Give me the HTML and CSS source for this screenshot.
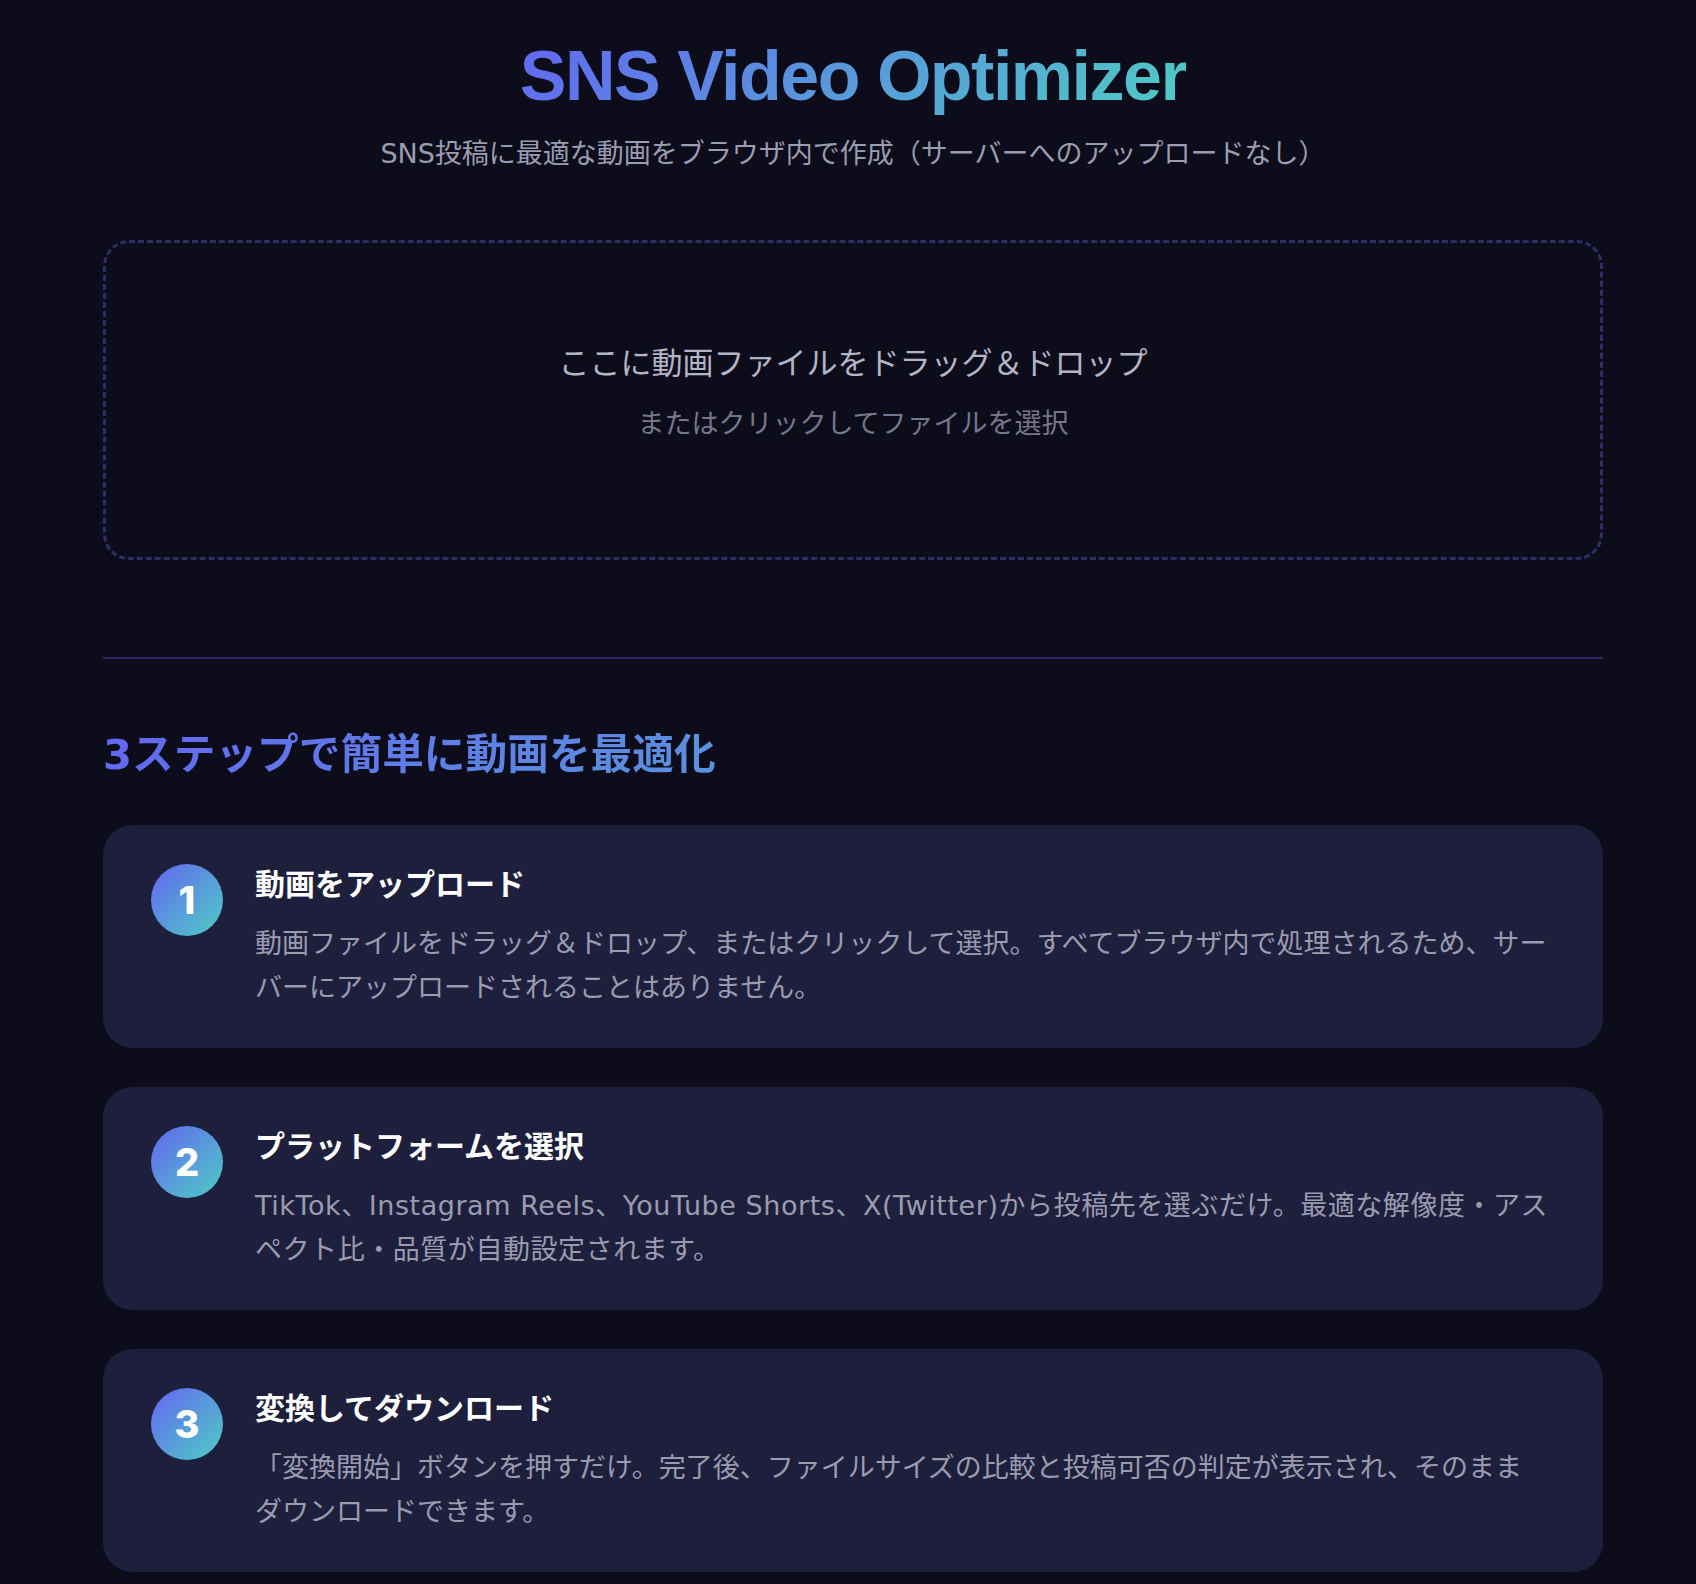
FILE: index.html
```html
<html>

<head>
    <meta charset="utf-8">
    <link rel="stylesheet" href="styles.css">
</head>

<body>
    <div class="container">
        <header class="header">
            <h1 class="title">SNS Video Optimizer</h1>
            <p class="subtitle">SNS投稿に最適な動画をブラウザ内で作成（サーバーへのアップロードなし）</p>
        </header>

        <div class="dropzone">
            <p class="drop-main">ここに動画ファイルをドラッグ＆ドロップ</p>
            <p class="drop-sub">またはクリックしてファイルを選択</p>
        </div>

        <hr class="divider">

        <section class="howto">
            <h2 class="howto-title">3ステップで簡単に動画を最適化</h2>
            <div class="step">
                <div class="step-num">1</div>
                <div class="step-body">
                    <h3 class="step-title">動画をアップロード</h3>
                    <p class="step-desc">動画ファイルをドラッグ＆ドロップ、またはクリックして選択。すべてブラウザ内で処理されるため、サーバーにアップロードされることはありません。</p>
                </div>
            </div>
            <div class="step">
                <div class="step-num">2</div>
                <div class="step-body">
                    <h3 class="step-title">プラットフォームを選択</h3>
                    <p class="step-desc step-desc-latin">TikTok、Instagram Reels、YouTube Shorts、X(Twitter)から投稿先を選ぶだけ。最適な解像度・アスペクト比・品質が自動設定されます。</p>
                </div>
            </div>
            <div class="step">
                <div class="step-num">3</div>
                <div class="step-body">
                    <h3 class="step-title">変換してダウンロード</h3>
                    <p class="step-desc">「変換開始」ボタンを押すだけ。完了後、ファイルサイズの比較と投稿可否の判定が表示され、そのまま<span class="nobr">ダウンロード</span>できます。</p>
                </div>
            </div>
        </section>
    </div>
</body>

</html>
```

FILE: styles.css
```css
* {
    margin: 0;
    padding: 0;
    box-sizing: border-box;
}

body {
    background-color: #0c0c1b;
    color: #e8e8f0;
    font-family: "DejaVu Sans", "Noto Sans CJK JP", sans-serif;
    padding-left: 10px;
}

.container {
    width: 1500px;
    margin: 0 auto;
    padding-top: 34px;
}

.header {
    text-align: center;
}

.title {
    display: inline-block;
    font-family: "Liberation Sans", "Noto Sans CJK JP", sans-serif;
    font-size: 70px;
    line-height: 84px;
    font-weight: 700;
    letter-spacing: -1.5px;
    background: linear-gradient(135deg, #6366f1 0%, #4ecdc4 100%);
    -webkit-background-clip: text;
    background-clip: text;
    color: transparent;
}

.subtitle {
    margin-top: 16px;
    font-size: 27px;
    line-height: 40px;
    color: #9c9cb0;
}

.dropzone {
    margin-top: 66px;
    border: 3px dashed #302c64;
    border-radius: 26px;
    padding: 99px 0 113px;
    text-align: center;
    cursor: pointer;
}

.drop-main {
    font-size: 31px;
    line-height: 43px;
    color: #b4b4c4;
}

.drop-sub {
    margin-top: 19px;
    font-size: 27px;
    line-height: 40px;
    color: #77778b;
}

.divider {
    margin-top: 97px;
    border: none;
    height: 2px;
    background-color: #2a2462;
}

.howto {
    margin-top: 66px;
}

.howto-title {
    font-size: 41.7px;
    line-height: 60px;
    font-weight: 700;
    background: linear-gradient(135deg, #6366f1 0%, #4ecdc4 100%);
    -webkit-background-clip: text;
    background-clip: text;
    color: transparent;
    margin-bottom: 40px;
}

.step {
    display: flex;
    gap: 32px;
    align-items: flex-start;
    background-color: #1e1f3d;
    border-radius: 30px;
    padding: 39px 48px 38px;
    margin-bottom: 39px;
}

.step-num {
    flex: 0 0 72px;
    width: 72px;
    height: 72px;
    border-radius: 50%;
    background: linear-gradient(135deg, #6366f1 0%, #4ecdc4 100%);
    color: #fff;
    font-family: "Inter", "Liberation Sans", sans-serif;
    font-size: 38px;
    font-weight: 800;
    display: flex;
    align-items: center;
    justify-content: center;
}

.step-body {
    flex: 1;
}

.step-title {
    font-size: 30px;
    line-height: 42px;
    font-weight: 700;
    color: #ffffff;
    margin-bottom: 16px;
}

.step-desc {
    font-size: 27px;
    line-height: 44px;
    color: #9b9bb0;
}

.step-desc-latin {
    letter-spacing: 0.55px;
}

.nobr {
    white-space: nowrap;
}
```
